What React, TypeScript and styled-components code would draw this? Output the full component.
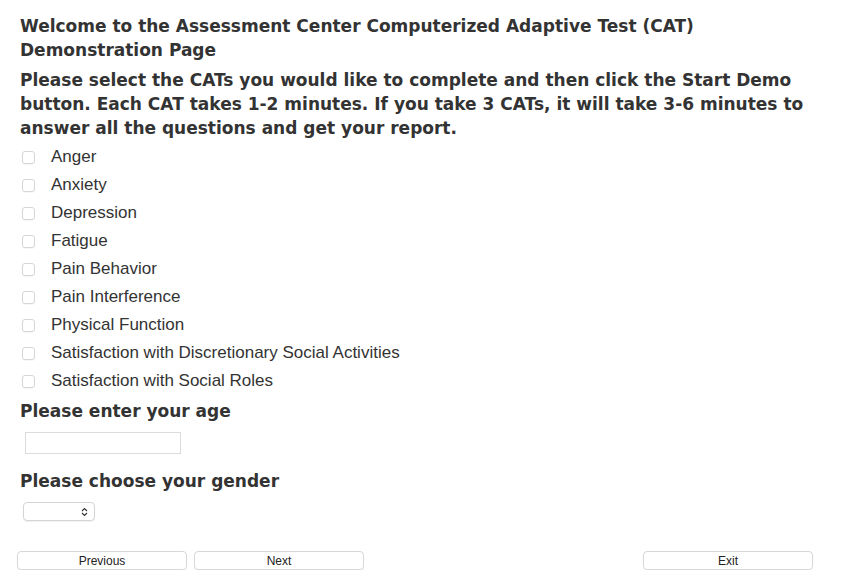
import React from "react";
import styled, { createGlobalStyle } from "styled-components";

const Global = createGlobalStyle`
  html, body { margin: 0; padding: 0; background: #fff; }
  body { font-family: "Liberation Sans", Arial, sans-serif; color: #333; }
`;

const Page = styled.div`
  padding: 14px 20px 0 20px;
  display: flex;
  flex-direction: column;
`;

const Heading = styled.h1`
  font-family: "DejaVu Sans", Verdana, sans-serif;
  font-weight: bold;
  font-size: 17px;
  line-height: 24px;
  margin: 0;
  color: #333;
`;

const Instructions = styled(Heading)`
  margin-top: 6px;
`;

const List = styled.ul`
  list-style: none;
  margin: 3px 0 0 0;
  padding: 0;
  display: flex;
  flex-direction: column;
`;

const Item = styled.li`
  display: flex;
  align-items: center;
  height: 28px;
  font-size: 17px;
  color: #333;
`;

const Box = styled.span`
  width: 11px;
  height: 11px;
  border: 1px solid #d6d6d6;
  border-radius: 3px;
  margin: 0 16px 0 2px;
  background: #fff;
  box-sizing: content-box;
  box-shadow: 0 1px 0 rgba(0,0,0,0.03);
`;

const SubHeading = styled(Heading)<{ $gap: number }>`
  margin-top: ${p => p.$gap}px;
`;

const AgeInput = styled.div`
  width: 154px;
  height: 20px;
  border: 1px solid #dcdcdc;
  margin: 9px 0 0 5px;
`;

const GenderSelect = styled.div`
  width: 72px;
  height: 19px;
  border: 1px solid #d4d4d4;
  border-radius: 4px;
  margin: 9px 0 0 3px;
  display: flex;
  align-items: center;
  justify-content: flex-end;
  padding-right: 6px;
  box-sizing: border-box;
  box-shadow: 0 1px 1px rgba(0,0,0,0.06);
`;

const ButtonRow = styled.div`
  display: flex;
  gap: 7px;
  margin: 30px 0 0 -3px;
  padding-right: 8px;
`;

const Button = styled.div<{ $push?: boolean }>`
  width: 170px;
  height: 19px;
  box-sizing: border-box;
  border: 1px solid #d8d8d8;
  border-radius: 4px;
  box-shadow: 0 1px 1px rgba(0,0,0,0.08);
  display: flex;
  align-items: center;
  justify-content: center;
  font-size: 12px;
  color: #222;
  margin-left: ${p => (p.$push ? "auto" : "0")};
`;

const items = [
  "Anger",
  "Anxiety",
  "Depression",
  "Fatigue",
  "Pain Behavior",
  "Pain Interference",
  "Physical Function",
  "Satisfaction with Discretionary Social Activities",
  "Satisfaction with Social Roles",
];

export default function App() {
  return (
    <>
      <Global />
      <Page>
        <Heading>
          Welcome to the Assessment Center Computerized Adaptive Test (CAT) Demonstration Page
        </Heading>
        <Instructions>
          Please select the CATs you would like to complete and then click the Start Demo button. Each CAT takes 1-2 minutes. If you take 3 CATs, it will take 3-6 minutes to answer all the questions and get your report.
        </Instructions>
        <List>
          {items.map(t => (
            <Item key={t}>
              <Box />
              {t}
            </Item>
          ))}
        </List>
        <SubHeading $gap={4}>Please enter your age</SubHeading>
        <AgeInput />
        <SubHeading $gap={15}>Please choose your gender</SubHeading>
        <GenderSelect>
          <svg width="7" height="10" viewBox="0 0 7 10">
            <path d="M1 4 L3.5 1.5 L6 4 M1 6 L3.5 8.5 L6 6" fill="none" stroke="#333" strokeWidth="1.1" />
          </svg>
        </GenderSelect>
        <ButtonRow>
          <Button>Previous</Button>
          <Button>Next</Button>
          <Button $push>Exit</Button>
        </ButtonRow>
      </Page>
    </>
  );
}
